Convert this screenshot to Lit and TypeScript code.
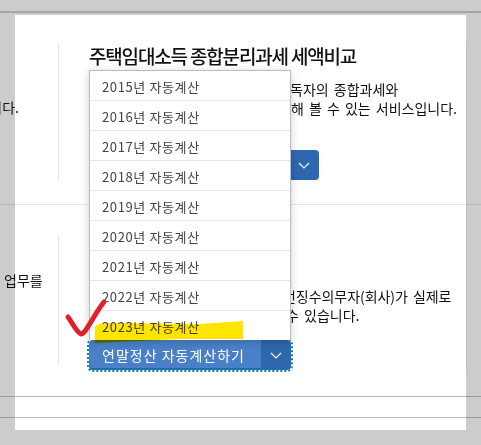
import { LitElement, html, css, svg } from "lit";
import { customElement } from "lit/decorators.js";

const chevron = html`<svg class="chev" width="12" height="7" viewBox="0 0 12 7"><polyline points="1,1 6,6 11,1" fill="none" stroke="#fff" stroke-width="1.2"/></svg>`;

@customElement("app-root")
export class AppRoot extends LitElement {
  static styles = css`
    :host { display: block; position: relative; width: 481px; height: 445px; overflow: hidden; background: #ccc;
      font-family: "Noto Sans CJK KR", "Noto Sans", sans-serif; font-size: 14px; color: #111; }
    .top { height: 11px; border-bottom: 2px solid #a3a7ad; margin-bottom: 2px; }
    .panel { width: 451px; height: 415px; margin-left: 15px; padding-top: 28px; box-sizing: border-box; background: #fff; display: flex; flex-direction: column; }
    .strip { position: absolute; left: 466px; top: 43px; width: 1px; height: 327px; background: #c0c0c0; }
    section { display: flex; margin-left: -15px; }
    .side { width: 58px; flex: none; white-space: nowrap; overflow: hidden; display: flex; box-sizing: border-box; }
    .side.a { padding-top: 54px; justify-content: flex-end; padding-right: 39px; }
    .side.b { padding-top: 35px; padding-left: 4px; }
    .body { border-left: 1px solid #e6e6e6; padding-left: 30px; width: 390px; box-sizing: border-box; }
    .s1 .body { height: 137px; }
    .s2 .body { height: 131px; padding-top: 52px; }
    h2 { margin: 0; font-size: 19px; line-height: 26px; font-weight: 500; letter-spacing: -1.17px; color: #111; white-space: nowrap; }
    p { margin: 0; line-height: 19px; white-space: nowrap; word-spacing: 2px; }
    p span { display: block; }
    .s1 p { margin-top: 11px; }
    .l1 { padding-left: 201px; }
    .l2 { padding-left: 189px; }
    .l3 { padding-left: 194px; letter-spacing: -0.05px; }
    .l4 { padding-left: 197px; }
    .rule { height: 1px; background: rgba(0,0,0,.1); margin: 24px -30px 30px -15px; flex: none; }
    .g1 { margin-top: 32px; display: flex; height: 30px; width: 230px; border-radius: 4px; overflow: hidden; }
    .main { flex: 1; background: #4a80c8; color: #fff; display: flex; align-items: center; padding-left: 13px; letter-spacing: 1px; white-space: nowrap; }
    .drop { width: 30px; flex: none; background: #2d67ae; display: flex; align-items: center; justify-content: center; }
    .g2 { position: relative; margin-top: 15px; width: 202px; height: 30px; display: flex; outline: 2px dotted #0b8a9c; outline-offset: 0; border-radius: 4px; }
    .g2 .main { border-radius: 4px 0 0 4px; box-shadow: inset 0 -2px 0 #2d67ae; }
    .g2 .drop { border-radius: 0 4px 4px 0; }
    .menu { position: absolute; left: 0; bottom: 100%; width: 202px; box-sizing: border-box; background: #fff; border: 1px solid #bdbdbd; border-bottom: 0; box-shadow: 0 2px 8px rgba(0,0,0,.2); }
    .item { height: 30px; box-sizing: border-box; padding: 2px 0 0 12px; display: flex; align-items: center; color: #444; font-size: 13px; letter-spacing: 0.62px; border-top: 1px solid #e6e6e6; }
    .item:first-child { border-top: 0; height: 29px; }
    .rules { position: absolute; left: 0; top: 396px; width: 481px; display: flex; flex-direction: column; gap: 20px; }
    .rules div { height: 1px; background: rgba(60,90,120,.4); }
    .marks { position: absolute; left: 0; top: 0; pointer-events: none; }
  `;

  render() {
    const years = [2015, 2016, 2017, 2018, 2019, 2020, 2021, 2022, 2023];
    return html`
      <div class="top"></div>
      <div class="panel">
        <section class="s1">
          <div class="side a"><span>니다.</span></div>
          <div class="body">
            <h2>주택임대소득 종합분리과세 세액비교</h2>
            <p><span class="l1">독자의 종합과세와</span><span class="l2">교해 볼 수 있는 서비스입니다.</span></p>
            <div class="g1"><div class="main"></div><div class="drop">${chevron}</div></div>
          </div>
        </section>
        <div class="rule"></div>
        <section class="s2">
          <div class="side b"><span>업무를</span></div>
          <div class="body">
            <p><span class="l3">천징수의무자(회사)가 실제로</span><span class="l4">수 있습니다.</span></p>
            <div class="g2">
              <div class="main">연말정산 자동계산하기</div>
              <div class="drop">${chevron}</div>
              <div class="menu">${years.map((y) => html`<div class="item">${y}년 자동계산</div>`)}</div>
            </div>
          </div>
        </section>
      </div>
      <div class="strip"></div>
      <div class="rules"><div></div><div></div></div>
      <svg class="marks" width="481" height="445" viewBox="0 0 481 445">
        ${svg`<path d="M95,327 Q97,323 110,323 L200,324 L243,321 L243,339 L180,339 L95,343 Z" fill="#ffe400" style="mix-blend-mode:multiply"/>
        <path d="M68,317 C72,322 76,332 81,334 C86,334 94,314 104,302" fill="none" stroke="#e0202a" stroke-width="5" stroke-linecap="round" stroke-linejoin="round"/>`}
      </svg>
    `;
  }
}
